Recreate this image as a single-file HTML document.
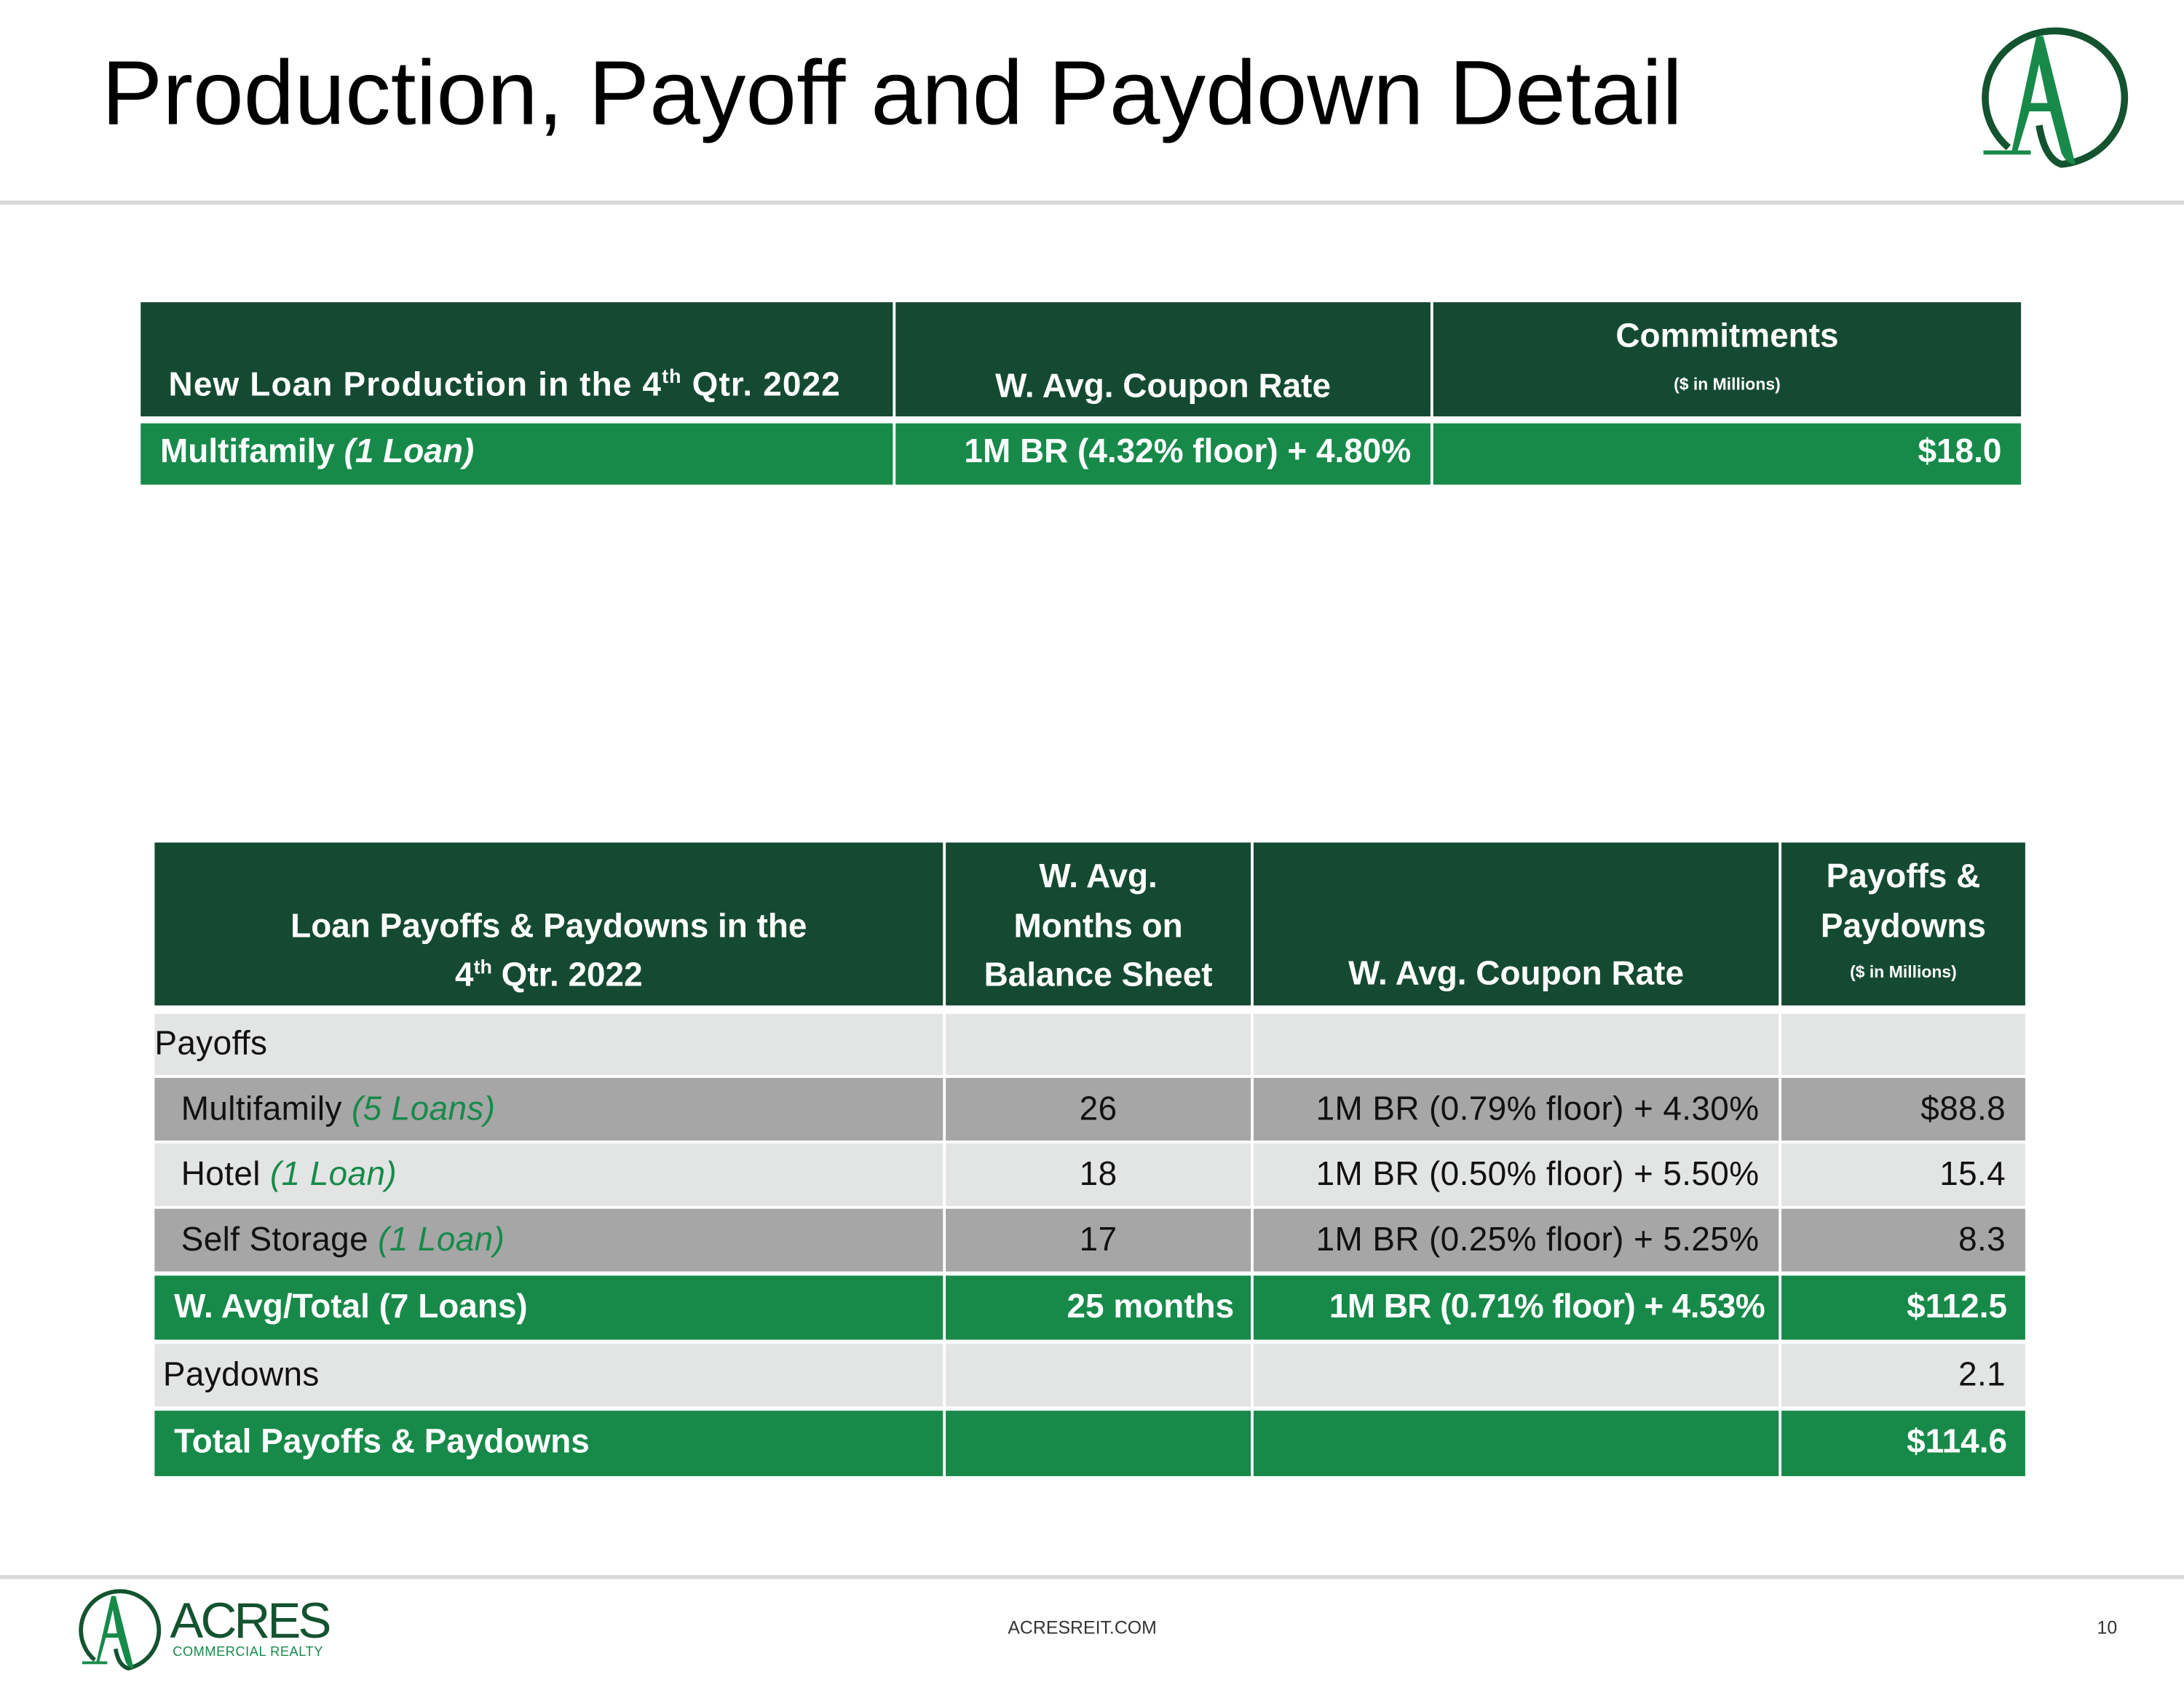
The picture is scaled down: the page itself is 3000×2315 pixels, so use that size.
<!DOCTYPE html>
<html><head><meta charset="utf-8"><style>
html,body{margin:0;padding:0;background:#fff;}
body{width:3000px;height:2315px;overflow:hidden;position:relative;}
#s{position:absolute;left:0;top:0;width:1568px;height:1210px;transform:scale(1.91327);transform-origin:0 0;font-family:"Liberation Sans",sans-serif;}
.a{position:absolute;}
.dg{background:#154a32;}
.g{background:#178a4a;}
.lt{background:#e3e4e4;}
.gr{background:#a6a6a6;}
.w{color:#fff;font-weight:bold;}
.cell{position:absolute;box-sizing:border-box;white-space:nowrap;}
.t2{font-size:24px;color:#111;letter-spacing:0.2px;}
.it{font-style:italic;color:#178a4a;}
.b{font-size:24px;}
</style></head><body><div id="s">
<div class="a" style="left:73px;top:29px;font-size:65.5px;color:#000;white-space:nowrap;">Production, Payoff and Paydown Detail</div>
<div class="a" style="left:0;top:144px;width:1568px;height:3px;background:#d9d9d9;"></div>

<svg class="a" style="left:1420px;top:14px" width="118" height="112" viewBox="0 0 118 112">
<path d="M22 92 A50 48 0 1 1 60 104 Q48 100 44 76" fill="none" stroke="#14532f" stroke-width="5"/>
<path fill-rule="evenodd" d="M42 12 L24 96 L28 96 L37 66 L52 66 L60 96 Q64 104 70 104 L47 12 Z M38 60 L44 32 L50 60 Z" fill="#178a4a"/>
<rect x="4" y="94" width="34" height="3" fill="#178a4a"/>
<rect x="37" y="60" width="15" height="5" fill="#178a4a"/>
</svg>

<!-- table 1 -->
<div class="cell dg" style="left:101px;top:217px;width:540px;height:82px;"></div>
<div class="cell dg" style="left:643px;top:217px;width:384px;height:82px;"></div>
<div class="cell dg" style="left:1029px;top:217px;width:422px;height:82px;"></div>
<div class="cell w b" style="left:121px;top:262px;letter-spacing:0.6px;">New Loan Production in the 4<sup style="font-size:14px">th</sup> Qtr. 2022</div>
<div class="cell w b" style="left:643px;top:264px;width:384px;text-align:center;">W. Avg. Coupon Rate</div>
<div class="cell w b" style="left:1029px;top:228px;width:422px;text-align:center;">Commitments</div>
<div class="cell w" style="left:1029px;top:269px;width:422px;text-align:center;font-size:12px;">($ in Millions)</div>
<div class="cell g" style="left:101px;top:304px;width:540px;height:44px;"></div>
<div class="cell g" style="left:643px;top:304px;width:384px;height:44px;"></div>
<div class="cell g" style="left:1029px;top:304px;width:422px;height:44px;"></div>
<div class="cell w b" style="left:115px;top:311px;">Multifamily <i>(1 Loan)</i></div>
<div class="cell w b" style="left:643px;top:311px;width:370px;text-align:right;">1M BR (4.32% floor) + 4.80%</div>
<div class="cell w b" style="left:1029px;top:311px;width:408px;text-align:right;">$18.0</div>

<!-- table 2 header -->
<div class="cell dg" style="left:111px;top:605px;width:566px;height:117px;"></div>
<div class="cell dg" style="left:679px;top:605px;width:219px;height:117px;"></div>
<div class="cell dg" style="left:900px;top:605px;width:377px;height:117px;"></div>
<div class="cell dg" style="left:1279px;top:605px;width:175px;height:117px;"></div>
<div class="cell w b" style="left:111px;top:648px;width:566px;text-align:center;line-height:35px;">Loan Payoffs &amp; Paydowns in the<br>4<sup style="font-size:14px;line-height:0">th</sup> Qtr. 2022</div>
<div class="cell w b" style="left:679px;top:612px;width:219px;text-align:center;line-height:35.5px;">W. Avg.<br>Months on<br>Balance Sheet</div>
<div class="cell w b" style="left:900px;top:686px;width:377px;text-align:center;">W. Avg. Coupon Rate</div>
<div class="cell w b" style="left:1279px;top:612px;width:175px;text-align:center;line-height:35.5px;">Payoffs &amp;<br>Paydowns</div>
<div class="cell w" style="left:1279px;top:691px;width:175px;text-align:center;font-size:12px;">($ in Millions)</div>

<div class="cell lt" style="left:111px;top:728px;width:566px;height:44px;"></div>
<div class="cell lt" style="left:679px;top:728px;width:219px;height:44px;"></div>
<div class="cell lt" style="left:900px;top:728px;width:377px;height:44px;"></div>
<div class="cell lt" style="left:1279px;top:728px;width:175px;height:44px;"></div>
<div class="cell t2" style="left:111px;top:736px;">Payoffs</div>

<div class="cell gr" style="left:111px;top:774px;width:566px;height:45px;"></div>
<div class="cell gr" style="left:679px;top:774px;width:219px;height:45px;"></div>
<div class="cell gr" style="left:900px;top:774px;width:377px;height:45px;"></div>
<div class="cell gr" style="left:1279px;top:774px;width:175px;height:45px;"></div>
<div class="cell t2" style="left:130px;top:783px;">Multifamily <span class="it">(5 Loans)</span></div>
<div class="cell t2" style="left:679px;top:783px;width:219px;text-align:center;">26</div>
<div class="cell t2" style="left:900px;top:783px;width:363px;text-align:right;">1M BR (0.79% floor) + 4.30%</div>
<div class="cell t2" style="left:1279px;top:783px;width:161px;text-align:right;">$88.8</div>

<div class="cell lt" style="left:111px;top:821px;width:566px;height:45px;"></div>
<div class="cell lt" style="left:679px;top:821px;width:219px;height:45px;"></div>
<div class="cell lt" style="left:900px;top:821px;width:377px;height:45px;"></div>
<div class="cell lt" style="left:1279px;top:821px;width:175px;height:45px;"></div>
<div class="cell t2" style="left:130px;top:830px;">Hotel <span class="it">(1 Loan)</span></div>
<div class="cell t2" style="left:679px;top:830px;width:219px;text-align:center;">18</div>
<div class="cell t2" style="left:900px;top:830px;width:363px;text-align:right;">1M BR (0.50% floor) + 5.50%</div>
<div class="cell t2" style="left:1279px;top:830px;width:161px;text-align:right;">15.4</div>

<div class="cell gr" style="left:111px;top:868px;width:566px;height:45px;"></div>
<div class="cell gr" style="left:679px;top:868px;width:219px;height:45px;"></div>
<div class="cell gr" style="left:900px;top:868px;width:377px;height:45px;"></div>
<div class="cell gr" style="left:1279px;top:868px;width:175px;height:45px;"></div>
<div class="cell t2" style="left:130px;top:877px;">Self Storage <span class="it">(1 Loan)</span></div>
<div class="cell t2" style="left:679px;top:877px;width:219px;text-align:center;">17</div>
<div class="cell t2" style="left:900px;top:877px;width:363px;text-align:right;">1M BR (0.25% floor) + 5.25%</div>
<div class="cell t2" style="left:1279px;top:877px;width:161px;text-align:right;">8.3</div>

<div class="cell g" style="left:111px;top:916px;width:566px;height:46px;"></div>
<div class="cell g" style="left:679px;top:916px;width:219px;height:46px;"></div>
<div class="cell g" style="left:900px;top:916px;width:377px;height:46px;"></div>
<div class="cell g" style="left:1279px;top:916px;width:175px;height:46px;"></div>
<div class="cell w b" style="left:125px;top:925px;">W. Avg/Total (7 Loans)</div>
<div class="cell w b" style="left:679px;top:925px;width:207px;text-align:right;">25 months</div>
<div class="cell w b" style="left:900px;top:925px;width:367px;text-align:right;letter-spacing:-0.3px;">1M BR (0.71% floor) + 4.53%</div>
<div class="cell w b" style="left:1279px;top:925px;width:162px;text-align:right;">$112.5</div>

<div class="cell lt" style="left:111px;top:965px;width:566px;height:45px;"></div>
<div class="cell lt" style="left:679px;top:965px;width:219px;height:45px;"></div>
<div class="cell lt" style="left:900px;top:965px;width:377px;height:45px;"></div>
<div class="cell lt" style="left:1279px;top:965px;width:175px;height:45px;"></div>
<div class="cell t2" style="left:117px;top:974px;">Paydowns</div>
<div class="cell t2" style="left:1279px;top:974px;width:161px;text-align:right;">2.1</div>

<div class="cell g" style="left:111px;top:1013px;width:566px;height:47px;"></div>
<div class="cell g" style="left:679px;top:1013px;width:219px;height:47px;"></div>
<div class="cell g" style="left:900px;top:1013px;width:377px;height:47px;"></div>
<div class="cell g" style="left:1279px;top:1013px;width:175px;height:47px;"></div>
<div class="cell w b" style="left:125px;top:1022px;">Total Payoffs &amp; Paydowns</div>
<div class="cell w b" style="left:1279px;top:1022px;width:162px;text-align:right;">$114.6</div>

<!-- footer -->
<div class="a" style="left:0;top:1131px;width:1568px;height:3px;background:#d9d9d9;"></div>
<svg class="a" style="left:56px;top:1138px" width="66" height="64" viewBox="0 0 66 64">
<path d="M12 54 A28 28 0 1 1 36 60 Q29 58 27 46" fill="none" stroke="#14532f" stroke-width="3"/>
<path fill-rule="evenodd" d="M24 8 L13 56 L15 56 L20 38 L29 38 L34 55 Q36 60 40 60 L27 8 Z M21 35 L25 18 L28 35 Z" fill="#178a4a"/>
<rect x="3" y="55" width="18" height="2" fill="#178a4a"/>
<rect x="20" y="35" width="9" height="3" fill="#178a4a"/>
</svg>
<div class="a" style="left:122px;top:1144px;font-size:36px;color:#14532f;letter-spacing:-2px;line-height:40px;">ACRES</div>
<div class="a" style="left:124px;top:1182px;font-size:9.5px;color:#178a4a;line-height:10px;letter-spacing:0.3px;">COMMERCIAL REALTY</div>
<div class="a" style="left:677px;top:1161px;width:200px;text-align:center;font-size:13px;color:#333;">ACRESREIT.COM</div>
<div class="a" style="left:1495px;top:1161px;width:25px;text-align:right;font-size:13px;color:#333;">10</div>
</div></body></html>
